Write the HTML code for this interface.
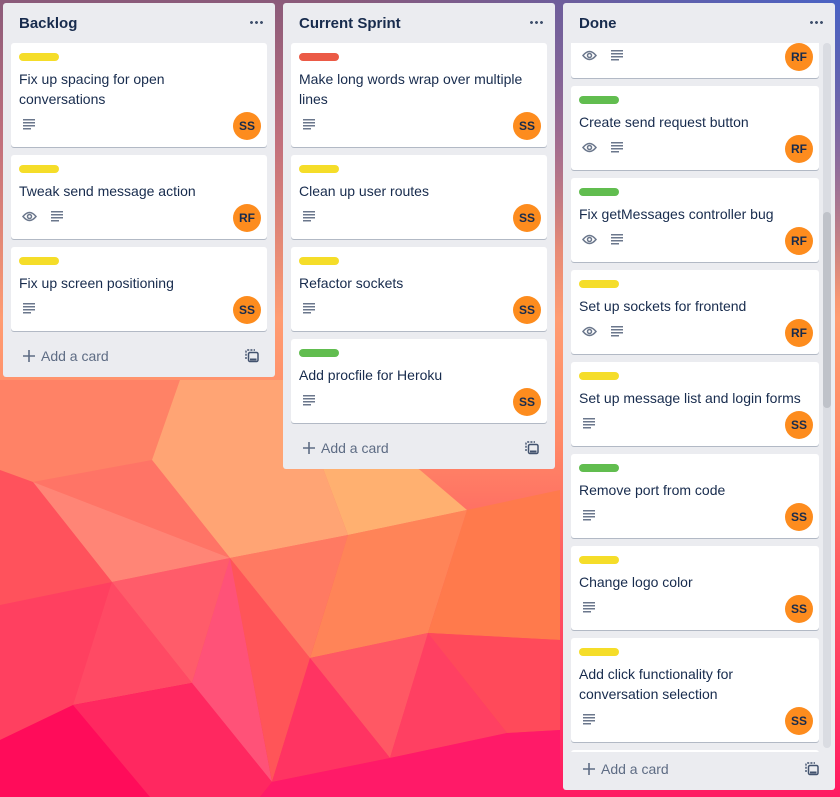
<!DOCTYPE html>
<html><head><meta charset="utf-8">
<style>
*{margin:0;padding:0;box-sizing:border-box}
body{width:840px;height:797px;overflow:hidden;position:relative;font-family:"Liberation Sans",sans-serif;color:#172b4d;
background:linear-gradient(180deg,#8a5a7a 0%,#c2707c 18%,#ff9c72 40%,#ff8a66 55%,#ff5a62 72%,#ff1a62 100%)}
.bg{position:absolute;left:0;top:0}
.list{position:absolute;background:#ebecf0;border-radius:3px}
.lt{position:absolute;left:16px;top:12px;font-weight:bold;font-size:15px;color:#172b4d}
.dots{position:absolute;right:12px;top:18px;width:14px;height:3px;
background:radial-gradient(circle,#42526e 1.3px,transparent 1.6px) 0 0/5px 3px repeat-x}
.card{position:absolute;background:#fff;border-radius:3px;box-shadow:0 1px 0 rgba(9,30,66,.25)}
.lab{position:absolute;left:8px;top:10px;width:40px;height:8px;border-radius:4px}
.y{background:#f5dd29}.r{background:#eb5a46}.g{background:#61bd4f}
.tt{position:absolute;left:8px;top:26px;font-size:14px;line-height:20px;white-space:nowrap;color:#172b4d}
.av{position:absolute;right:6px;bottom:7px;width:28px;height:28px;border-radius:50%;background:#fd8c1e;color:#172b4d;font-size:12px;font-weight:bold;text-align:center;line-height:28px}
.ic{position:absolute}
.add{position:absolute;left:19px;font-size:14px;color:#5e6c84;line-height:16px}
.add svg{position:relative;top:2px;margin-right:5px}
.tpl{position:absolute;right:16px}
</style></head><body>
<svg class="bg" width="840" height="797" viewBox="0 0 840 797">
<defs><radialGradient id="rb" cx="1" cy="0" r="0.6"><stop offset="0" stop-color="#4a62c4"/><stop offset="1" stop-color="#4a62c4" stop-opacity="0"/></radialGradient></defs>
<rect width="840" height="500" fill="url(#rb)"/>
<polygon points="0,380 180,380 152,460 33,482 0,470" fill="#ff8266"/>
<polygon points="180,380 290,380 348,535 230,558 152,460" fill="#ffa474"/>
<polygon points="290,380 420,470 467,510 348,535" fill="#ffb070"/>
<polygon points="33,482 152,460 230,558" fill="#ff7466"/>
<polygon points="33,482 230,558 112,582" fill="#ff8576"/>
<polygon points="0,470 33,482 112,582 0,605" fill="#ff525c"/>
<polygon points="0,605 112,582 73,705 0,740" fill="#ff4060"/>
<polygon points="112,582 230,558 192,683" fill="#ff5c6a"/>
<polygon points="112,582 192,683 73,705" fill="#ff4a64"/>
<polygon points="230,558 192,683 272,782" fill="#ff5278"/>
<polygon points="230,558 310,658 272,782" fill="#ff5558"/>
<polygon points="230,558 348,535 310,658" fill="#ff7a62"/>
<polygon points="348,535 467,510 428,633 310,658" fill="#ff8458"/>
<polygon points="467,510 560,490 560,640 428,633" fill="#ff7a4c"/>
<polygon points="0,740 73,705 192,683 150,797 0,797" fill="#ff0c5a"/>
<polygon points="73,705 192,683 272,782 260,797 150,797" fill="#ff2860"/>
<polygon points="310,658 428,633 390,758" fill="#ff5864"/>
<polygon points="310,658 390,758 272,782" fill="#ff3462"/>
<polygon points="428,633 507,733 390,758" fill="#ff4062"/>
<polygon points="428,633 560,640 560,730 507,733" fill="#ff4a5a"/>
<polygon points="272,782 390,758 507,733 560,730 560,797 260,797" fill="#ff1a68"/>
</svg>

<!-- Backlog -->
<div class="list" style="left:3px;top:3px;width:272px;height:374px">
<div class="lt">Backlog</div><div class="dots"></div>
<div class="add" style="top:344px"><svg width="14" height="14" viewBox="0 0 14 14"><path d="M7 1V13M1 7H13" stroke="#5e6c84" stroke-width="1.6"/></svg>Add a card</div>
<svg class="tpl" style="top:346px" width="14" height="14" viewBox="0 0 14 14"><path d="M1 10V2.5Q1 1 2.5 1H10" fill="none" stroke="#42526e" stroke-width="1.4" stroke-dasharray="2 1.2"/><rect x="3.5" y="3.5" width="9.5" height="9" rx="1.5" fill="none" stroke="#42526e" stroke-width="1.5"/><rect x="5" y="9.5" width="6.5" height="2" fill="#42526e"/></svg>
</div>

<!-- Current Sprint -->
<div class="list" style="left:283px;top:3px;width:272px;height:466px">
<div class="lt">Current Sprint</div><div class="dots"></div>
<div class="add" style="top:436px"><svg width="14" height="14" viewBox="0 0 14 14"><path d="M7 1V13M1 7H13" stroke="#5e6c84" stroke-width="1.6"/></svg>Add a card</div>
<svg class="tpl" style="top:438px" width="14" height="14" viewBox="0 0 14 14"><path d="M1 10V2.5Q1 1 2.5 1H10" fill="none" stroke="#42526e" stroke-width="1.4" stroke-dasharray="2 1.2"/><rect x="3.5" y="3.5" width="9.5" height="9" rx="1.5" fill="none" stroke="#42526e" stroke-width="1.5"/><rect x="5" y="9.5" width="6.5" height="2" fill="#42526e"/></svg>
</div>

<!-- Done -->
<div class="list" style="left:563px;top:3px;width:272px;height:787px">
<div class="lt">Done</div><div class="dots"></div>
<div style="position:absolute;left:260px;top:40px;width:8px;height:705px;border-radius:4px;background:#dadce2"></div>
<div style="position:absolute;left:260px;top:209px;width:8px;height:196px;border-radius:4px;background:#bfc2c9"></div>
<div class="add" style="top:757px"><svg width="14" height="14" viewBox="0 0 14 14"><path d="M7 1V13M1 7H13" stroke="#5e6c84" stroke-width="1.6"/></svg>Add a card</div>
<svg class="tpl" style="top:759px" width="14" height="14" viewBox="0 0 14 14"><path d="M1 10V2.5Q1 1 2.5 1H10" fill="none" stroke="#42526e" stroke-width="1.4" stroke-dasharray="2 1.2"/><rect x="3.5" y="3.5" width="9.5" height="9" rx="1.5" fill="none" stroke="#42526e" stroke-width="1.5"/><rect x="5" y="9.5" width="6.5" height="2" fill="#42526e"/></svg>
</div>

<div id="b"></div>
<div id="doneclip" style="position:absolute;left:571px;top:43px;width:248px;height:709px;overflow:hidden"></div>

<svg width="0" height="0" style="position:absolute">
<defs>
<g id="desc"><rect x="0" y="0" width="12" height="1.5" fill="#6b778c"/><rect x="0" y="3" width="12" height="1.5" fill="#6b778c"/><rect x="0" y="6" width="12" height="1.5" fill="#6b778c"/><rect x="0" y="9" width="8" height="1.5" fill="#6b778c"/></g>
</defs></svg>

<script>
function card(parent,x,y,w,lab,title,eye,av){
  var lines=title.split('|').length;
  var h=84+(lines-1)*20;
  var d=document.createElement('div');d.className='card';
  d.style.cssText='left:'+x+'px;top:'+y+'px;width:'+w+'px;height:'+h+'px';
  var s='';
  if(lab) s+='<div class="lab '+lab+'"></div>';
  if(title) s+='<div class="tt">'+title.split('|').join('<br>')+'</div>';
  var ix=12;
  if(eye){s+='<svg class="ic" style="left:11px;bottom:17px" width="15" height="11" viewBox="0 0 15 11"><path d="M1 5.5Q7.5-2.5 14 5.5Q7.5 13.5 1 5.5Z" fill="none" stroke="#6b778c" stroke-width="1.5"/><circle cx="7.5" cy="5.5" r="2" fill="none" stroke="#6b778c" stroke-width="1.5"/></svg>';ix=40;}
  s+='<svg class="ic" style="left:'+ix+'px;bottom:17px" width="12" height="11" viewBox="0 0 12 11"><use href="#desc"/></svg>';
  s+='<div class="av">'+av+'</div>';
  d.innerHTML=s;parent.appendChild(d);
}
var b=document.getElementById('b');
card(b,11,43,256,'y','Fix up spacing for open|conversations',0,'SS');
card(b,11,155,256,'y','Tweak send message action',1,'RF');
card(b,11,247,256,'y','Fix up screen positioning',0,'SS');
card(b,291,43,256,'r','Make long words wrap over multiple|lines',0,'SS');
card(b,291,155,256,'y','Clean up user routes',0,'SS');
card(b,291,247,256,'y','Refactor sockets',0,'SS');
card(b,291,339,256,'g','Add procfile for Heroku',0,'SS');
var dc=document.getElementById('doneclip');
card(dc,0,-49,248,'g','Placeholder',1,'RF');
card(dc,0,43,248,'g','Create send request button',1,'RF');
card(dc,0,135,248,'g','Fix getMessages controller bug',1,'RF');
card(dc,0,227,248,'y','Set up sockets for frontend',1,'RF');
card(dc,0,319,248,'y','Set up message list and login forms',0,'SS');
card(dc,0,411,248,'g','Remove port from code',0,'SS');
card(dc,0,503,248,'y','Change logo color',0,'SS');
card(dc,0,595,248,'y','Add click functionality for|conversation selection',0,'SS');
card(dc,0,707,248,'y','More',0,'SS');
</script>
</body></html>
